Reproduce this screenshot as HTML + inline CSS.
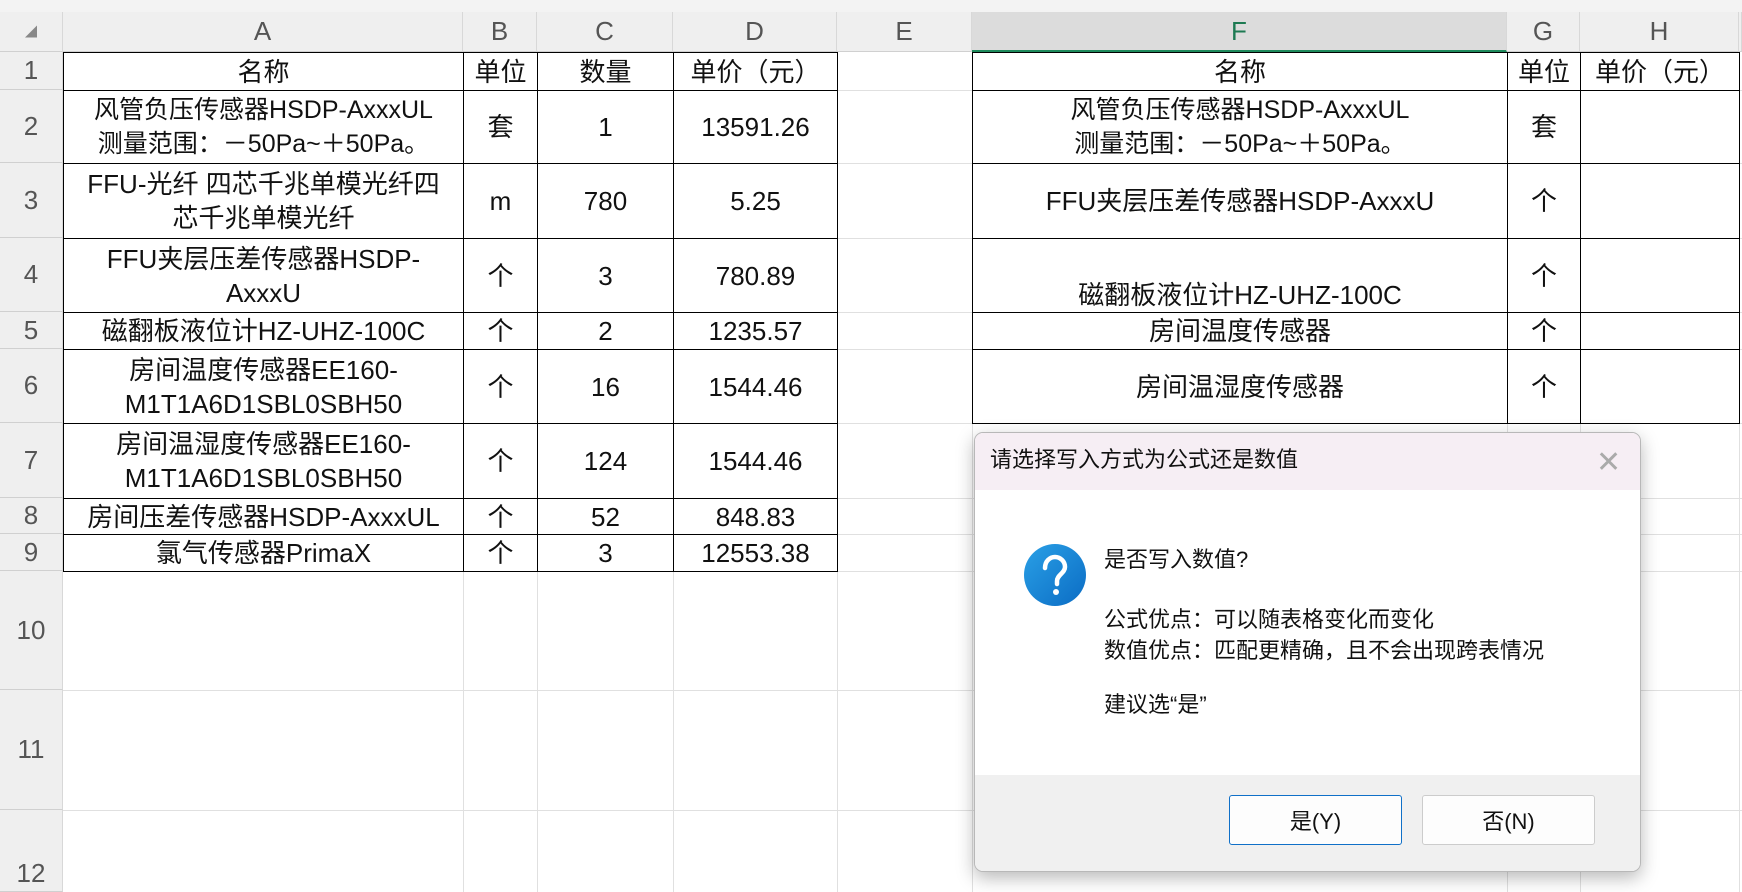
<!DOCTYPE html>
<html><head><meta charset="utf-8"><style>
body{margin:0;width:1742px;height:892px;position:relative;overflow:hidden;background:#fff;font-family:"Liberation Sans","Noto Sans CJK SC",sans-serif;color:#111}
div{box-sizing:border-box}
.a{position:absolute}
.c{position:absolute;display:flex;align-items:center;justify-content:center;text-align:center;font-size:26px;line-height:34px;border:1px solid #000;white-space:nowrap}
.h{position:absolute;display:flex;align-items:center;justify-content:center;font-size:26px;color:#555;background:#efefef;border-right:1px solid #d8d8d8;border-bottom:1px solid #d0d0d0}
.gv{position:absolute;width:1px;background:#e0e0e0;top:52px;height:840px}
.gh{position:absolute;height:1px;background:#e0e0e0;left:63px;width:1679px}
</style></head><body>
<div class="a" style="left:0;top:0;width:1742px;height:12px;background:#f3f3f3"></div>
<div class="gv" style="left:463px"></div><div class="gv" style="left:537px"></div><div class="gv" style="left:673px"></div><div class="gv" style="left:837px"></div><div class="gv" style="left:972px"></div><div class="gv" style="left:1507px"></div><div class="gv" style="left:1580px"></div><div class="gv" style="left:1739px"></div>
<div class="gh" style="top:90px"></div><div class="gh" style="top:163px"></div><div class="gh" style="top:238px"></div><div class="gh" style="top:312px"></div><div class="gh" style="top:349px"></div><div class="gh" style="top:423px"></div><div class="gh" style="top:498px"></div><div class="gh" style="top:534px"></div><div class="gh" style="top:571px"></div><div class="gh" style="top:690px"></div><div class="gh" style="top:810px"></div>
<div class="h" style="left:0;top:12px;width:63px;height:40px;font-size:12px;color:#888">◢</div>
<div class="h" style="left:63px;top:12px;width:400px;height:40px">A</div>
<div class="h" style="left:463px;top:12px;width:74px;height:40px">B</div>
<div class="h" style="left:537px;top:12px;width:136px;height:40px">C</div>
<div class="h" style="left:673px;top:12px;width:164px;height:40px">D</div>
<div class="h" style="left:837px;top:12px;width:135px;height:40px">E</div>
<div class="h" style="left:972px;top:12px;width:535px;height:40px;background:#dcdcdc;color:#1d7a52;border-bottom:2px solid #1e8a5c">F</div>
<div class="h" style="left:1507px;top:12px;width:73px;height:40px">G</div>
<div class="h" style="left:1580px;top:12px;width:159px;height:40px">H</div>
<div class="h" style="left:1739px;top:12px;width:3px;height:40px"></div>
<div class="h" style="left:0;top:52px;width:63px;height:38px">1</div>
<div class="h" style="left:0;top:90px;width:63px;height:73px">2</div>
<div class="h" style="left:0;top:163px;width:63px;height:75px">3</div>
<div class="h" style="left:0;top:238px;width:63px;height:74px">4</div>
<div class="h" style="left:0;top:312px;width:63px;height:37px">5</div>
<div class="h" style="left:0;top:349px;width:63px;height:74px">6</div>
<div class="h" style="left:0;top:423px;width:63px;height:75px">7</div>
<div class="h" style="left:0;top:498px;width:63px;height:36px">8</div>
<div class="h" style="left:0;top:534px;width:63px;height:37px">9</div>
<div class="h" style="left:0;top:571px;width:63px;height:119px">10</div>
<div class="h" style="left:0;top:690px;width:63px;height:120px">11</div>
<div class="h" style="left:0;top:810px;width:63px;height:82px;align-items:flex-end;padding-bottom:2px">12</div>

<div class="c" style="left:63px;top:52px;width:401px;height:39px">名称</div>
<div class="c" style="left:463px;top:52px;width:75px;height:39px">单位</div>
<div class="c" style="left:537px;top:52px;width:137px;height:39px">数量</div>
<div class="c" style="left:673px;top:52px;width:165px;height:39px">单价（元）</div>

<div class="c" style="left:63px;top:90px;width:401px;height:74px;font-size:25px">风管负压传感器HSDP-AxxxUL<br>测量范围：－50Pa~＋50Pa。</div>
<div class="c" style="left:463px;top:90px;width:75px;height:74px">套</div>
<div class="c" style="left:537px;top:90px;width:137px;height:74px">1</div>
<div class="c" style="left:673px;top:90px;width:165px;height:74px">13591.26</div>

<div class="c" style="left:63px;top:163px;width:401px;height:76px">FFU-光纤 四芯千兆单模光纤四<br>芯千兆单模光纤</div>
<div class="c" style="left:463px;top:163px;width:75px;height:76px">m</div>
<div class="c" style="left:537px;top:163px;width:137px;height:76px">780</div>
<div class="c" style="left:673px;top:163px;width:165px;height:76px">5.25</div>

<div class="c" style="left:63px;top:238px;width:401px;height:75px">FFU夹层压差传感器HSDP-<br>AxxxU</div>
<div class="c" style="left:463px;top:238px;width:75px;height:75px">个</div>
<div class="c" style="left:537px;top:238px;width:137px;height:75px">3</div>
<div class="c" style="left:673px;top:238px;width:165px;height:75px">780.89</div>

<div class="c" style="left:63px;top:312px;width:401px;height:38px">磁翻板液位计HZ-UHZ-100C</div>
<div class="c" style="left:463px;top:312px;width:75px;height:38px">个</div>
<div class="c" style="left:537px;top:312px;width:137px;height:38px">2</div>
<div class="c" style="left:673px;top:312px;width:165px;height:38px">1235.57</div>

<div class="c" style="left:63px;top:349px;width:401px;height:75px">房间温度传感器EE160-<br>M1T1A6D1SBL0SBH50</div>
<div class="c" style="left:463px;top:349px;width:75px;height:75px">个</div>
<div class="c" style="left:537px;top:349px;width:137px;height:75px">16</div>
<div class="c" style="left:673px;top:349px;width:165px;height:75px">1544.46</div>

<div class="c" style="left:63px;top:423px;width:401px;height:76px">房间温湿度传感器EE160-<br>M1T1A6D1SBL0SBH50</div>
<div class="c" style="left:463px;top:423px;width:75px;height:76px">个</div>
<div class="c" style="left:537px;top:423px;width:137px;height:76px">124</div>
<div class="c" style="left:673px;top:423px;width:165px;height:76px">1544.46</div>

<div class="c" style="left:63px;top:498px;width:401px;height:37px">房间压差传感器HSDP-AxxxUL</div>
<div class="c" style="left:463px;top:498px;width:75px;height:37px">个</div>
<div class="c" style="left:537px;top:498px;width:137px;height:37px">52</div>
<div class="c" style="left:673px;top:498px;width:165px;height:37px">848.83</div>

<div class="c" style="left:63px;top:534px;width:401px;height:38px">氯气传感器PrimaX</div>
<div class="c" style="left:463px;top:534px;width:75px;height:38px">个</div>
<div class="c" style="left:537px;top:534px;width:137px;height:38px">3</div>
<div class="c" style="left:673px;top:534px;width:165px;height:38px">12553.38</div>

<div class="c" style="left:972px;top:52px;width:536px;height:39px">名称</div>
<div class="c" style="left:1507px;top:52px;width:74px;height:39px">单位</div>
<div class="c" style="left:1580px;top:52px;width:160px;height:39px">单价（元）</div>

<div class="c" style="left:972px;top:90px;width:536px;height:74px;font-size:25px">风管负压传感器HSDP-AxxxUL<br>测量范围：－50Pa~＋50Pa。</div>
<div class="c" style="left:1507px;top:90px;width:74px;height:74px">套</div>
<div class="c" style="left:1580px;top:90px;width:160px;height:74px"></div>

<div class="c" style="left:972px;top:163px;width:536px;height:76px">FFU夹层压差传感器HSDP-AxxxU</div>
<div class="c" style="left:1507px;top:163px;width:74px;height:76px">个</div>
<div class="c" style="left:1580px;top:163px;width:160px;height:76px"></div>

<div class="c" style="left:972px;top:238px;width:536px;height:75px;align-items:flex-end">磁翻板液位计HZ-UHZ-100C</div>
<div class="c" style="left:1507px;top:238px;width:74px;height:75px">个</div>
<div class="c" style="left:1580px;top:238px;width:160px;height:75px"></div>

<div class="c" style="left:972px;top:312px;width:536px;height:38px">房间温度传感器</div>
<div class="c" style="left:1507px;top:312px;width:74px;height:38px">个</div>
<div class="c" style="left:1580px;top:312px;width:160px;height:38px"></div>

<div class="c" style="left:972px;top:349px;width:536px;height:75px">房间温湿度传感器</div>
<div class="c" style="left:1507px;top:349px;width:74px;height:75px">个</div>
<div class="c" style="left:1580px;top:349px;width:160px;height:75px"></div>

<div class="a" style="left:974px;top:432px;width:667px;height:440px;border:1px solid #b8b8b8;border-radius:9px;background:#fff;overflow:hidden;box-shadow:0 6px 18px rgba(0,0,0,.28)">
 <div class="a" style="left:0;top:0;width:667px;height:57px;background:#f6eef4"></div>
 <div class="a" style="left:15px;top:11px;font-size:22px;line-height:32px;color:#111">请选择写入方式为公式还是数值</div>
 <div class="a" style="left:621px;top:12px;font-size:30px;color:#aaa;font-weight:300">✕</div>
 <svg class="a" style="left:48px;top:110px" width="64" height="64" viewBox="0 0 64 64"><defs><linearGradient id="g" x1="0" y1="0" x2="1" y2="1"><stop offset="0" stop-color="#2aa0e6"/><stop offset="1" stop-color="#0b6cc4"/></linearGradient></defs><circle cx="32" cy="32" r="31" fill="url(#g)"/><path d="M22 25c0-7 5-11 10-11s10 4 10 10c0 6-8 8-8 14v3" stroke="#fff" stroke-width="4.5" fill="none" stroke-linecap="round"/><circle cx="33" cy="49" r="3" fill="#fff"/></svg>
 <div class="a" style="left:129px;top:112px;font-size:22px;line-height:30px;color:#111">是否写入数值?</div>
 <div class="a" style="left:129px;top:171px;font-size:22px;line-height:31px;color:#111">公式优点：可以随表格变化而变化<br>数值优点：匹配更精确，且不会出现跨表情况</div>
 <div class="a" style="left:129px;top:257px;font-size:22px;line-height:30px;color:#111">建议选“是”</div>
 <div class="a" style="left:0;top:342px;width:667px;height:98px;background:#f0f0f0"></div>
 <div class="a" style="left:254px;top:362px;width:173px;height:50px;border:1.5px solid #1070c8;border-radius:3px;background:#fdfdfd;display:flex;align-items:center;justify-content:center;font-size:22px">是(Y)</div>
 <div class="a" style="left:447px;top:362px;width:173px;height:50px;border:1px solid #ccc;border-radius:3px;background:#fdfdfd;display:flex;align-items:center;justify-content:center;font-size:22px">否(N)</div>
</div>
</body></html>
